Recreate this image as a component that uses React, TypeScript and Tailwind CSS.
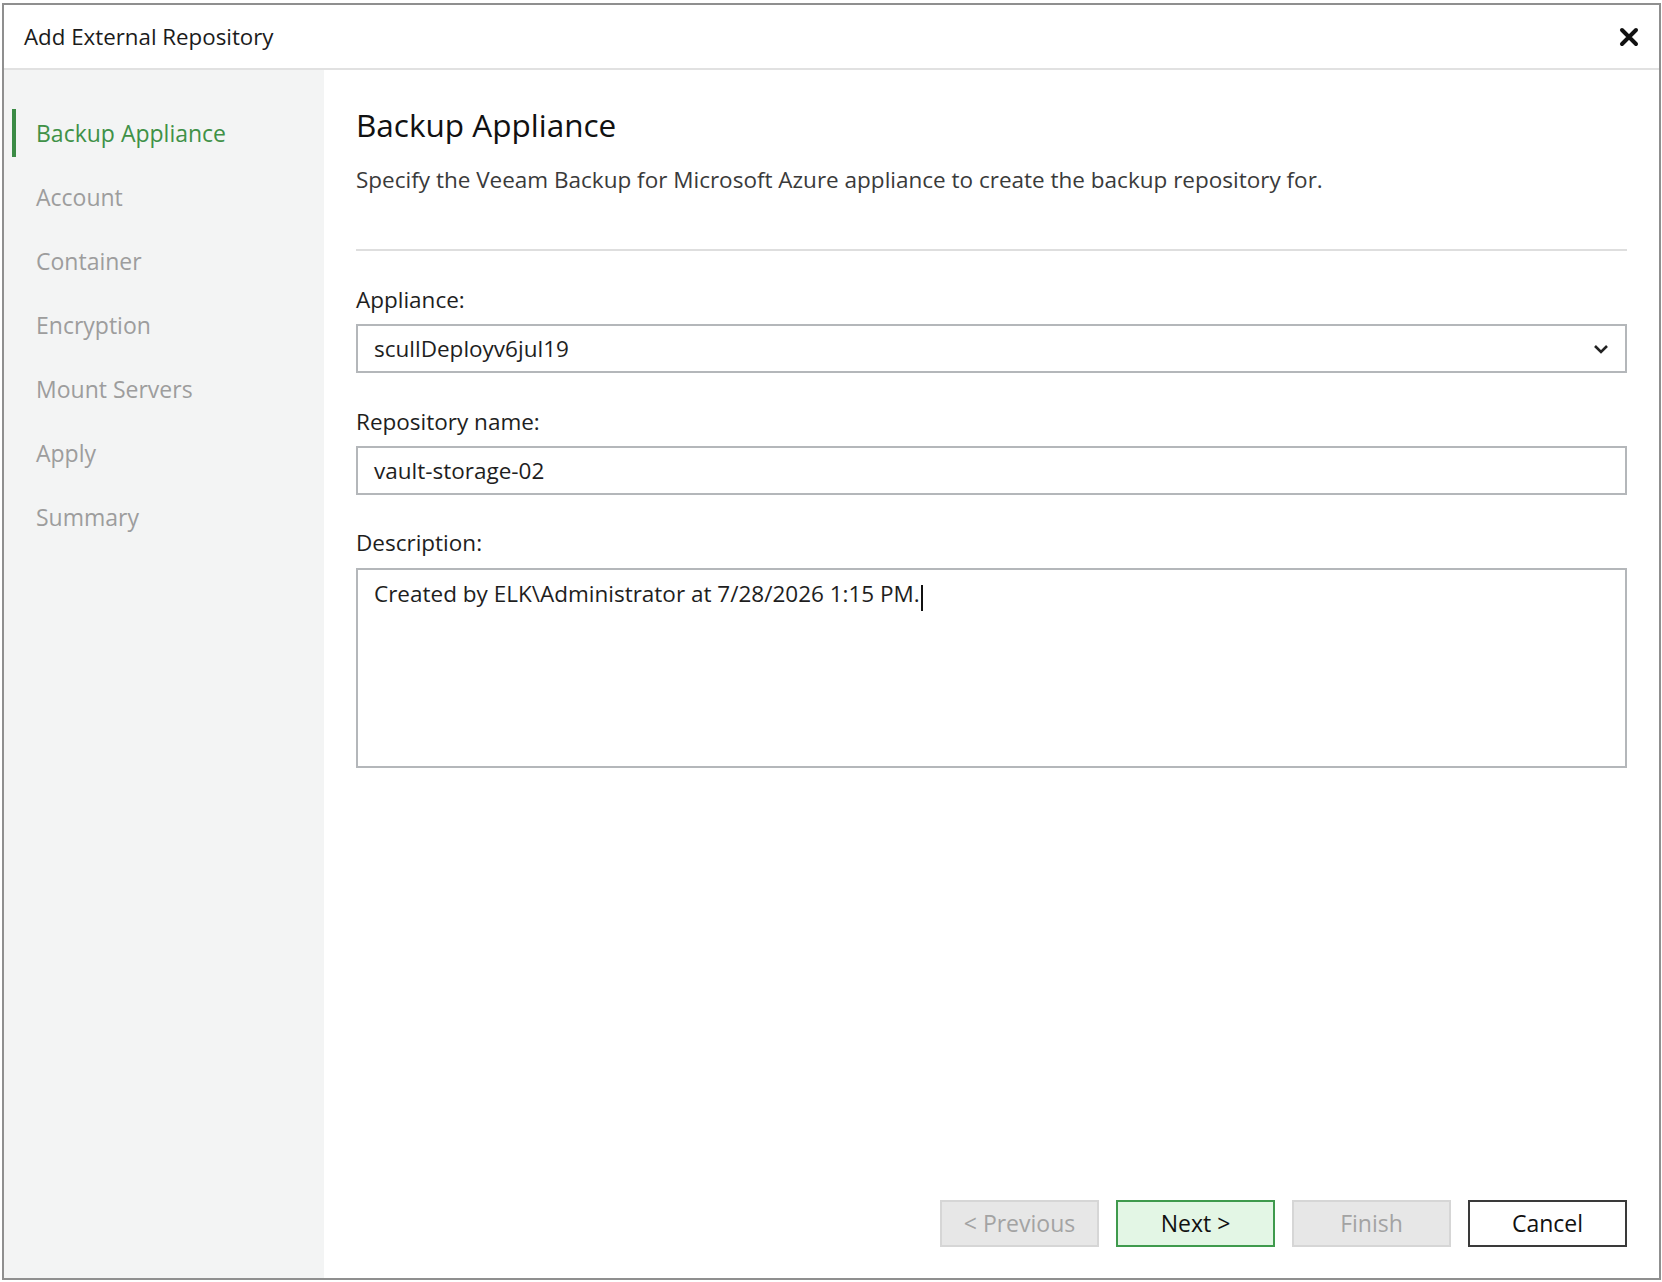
import React from "react";

const steps = [
  "Backup Appliance",
  "Account",
  "Container",
  "Encryption",
  "Mount Servers",
  "Apply",
  "Summary",
];

const font = { fontFamily: '"Open Sans", "Noto Sans", sans-serif' };

const App = () => {
  return (
    <div className="w-[1662px] h-[1282px] bg-white pt-[3px] pl-[2px] pr-[1px] pb-[2px]" style={font}>
      <div className="flex h-full flex-col border-2 border-[#8f8f8f]">
        {/* title bar */}
        <div className="flex h-[65px] shrink-0 items-center justify-between border-b-2 border-[#e1e1e1] pl-[20px] pr-[20px]">
          <div className="text-[22.3px] text-[#1b1b1b]">Add External Repository</div>
          <svg width="20" height="20" viewBox="0 0 20 20">
            <path d="M3 3 L17 17 M17 3 L3 17" stroke="#111" strokeWidth="4" strokeLinecap="round" />
          </svg>
        </div>

        <div className="flex flex-1">
          {/* steps */}
          <div className="flex w-[320px] shrink-0 flex-col gap-[16px] bg-[#f3f4f4] pt-[39px]">
            {steps.map((step, index) => (
              <div key={step} className="flex h-[48px] items-center">
                <div className={`ml-[8px] h-full w-[4px] ${index === 0 ? "bg-[#3b8b45]" : "bg-transparent"}`} />
                <div
                  className={`ml-[20px] text-[23px] leading-[30px] ${index === 0 ? "text-[#3f9147]" : "text-[#9d9d9d]"}`}
                >
                  {step}
                </div>
              </div>
            ))}
          </div>

          {/* page */}
          <div className="flex flex-1 flex-col pl-[32px] pr-[32px] pt-[35px] pb-[31px]">
            <div className="text-[31.5px] leading-[40px] text-[#111]">Backup Appliance</div>
            <div className="mt-[21px] text-[22.5px] leading-[28px] text-[#3a3a3a]">
              Specify the Veeam Backup for Microsoft Azure appliance to create the backup repository for.
            </div>
            <div className="mt-[55px] h-[2px] bg-[#dedede]" />

            <div className="mt-[35px] text-[22.5px] leading-[28px] text-[#1e1e1e]">Appliance:</div>
            <div className="mt-[10px] flex h-[49px] items-center justify-between border-2 border-[#b4b7ba] pl-[16px] pr-[16px]">
              <span className="text-[22.5px] text-[#1e1e1e]">scullDeployv6jul19</span>
              <svg width="16" height="10" viewBox="0 0 16 10">
                <polyline points="2,2 8,8 14,2" fill="none" stroke="#222" strokeWidth="2.6" />
              </svg>
            </div>

            <div className="mt-[35px] text-[22.5px] leading-[28px] text-[#1e1e1e]">Repository name:</div>
            <div className="mt-[10px] flex h-[49px] items-center border-2 border-[#b4b7ba] pl-[16px]">
              <span className="text-[22.5px] text-[#1e1e1e]">vault-storage-02</span>
            </div>

            <div className="mt-[34px] text-[22.5px] leading-[28px] text-[#1e1e1e]">Description:</div>
            <div className="mt-[11px] h-[200px] border-2 border-[#b4b7ba] pl-[16px] pt-[10px]">
              <span className="text-[22.5px] leading-[28px] text-[#1e1e1e]">
                Created by ELK\Administrator at 7/28/2026 1:15 PM.
              </span>
              <span className="ml-[1px] inline-block h-[26px] w-[2px] bg-[#111] align-middle" />
            </div>

            <div className="mt-auto flex justify-end gap-[17px]">
              <button className="h-[47px] w-[159px] border-2 border-[#d6d6d6] bg-[#e7e7e7] text-[23px] text-[#a3a3a3]">
                &lt; Previous
              </button>
              <button className="h-[47px] w-[159px] border-2 border-[#3f9a4d] bg-[#e3f6e5] text-[23px] text-[#111]">
                Next &gt;
              </button>
              <button className="h-[47px] w-[159px] border-2 border-[#d6d6d6] bg-[#e7e7e7] text-[23px] text-[#a3a3a3]">
                Finish
              </button>
              <button className="h-[47px] w-[159px] border-2 border-[#3a3a3a] bg-white text-[23px] text-[#111]">
                Cancel
              </button>
            </div>
          </div>
        </div>
      </div>
    </div>
  );
};

export default App;
